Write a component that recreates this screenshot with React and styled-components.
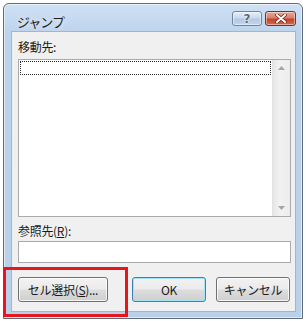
import React from 'react';
import styled, { createGlobalStyle } from 'styled-components';

const Global = createGlobalStyle`
  html, body {
    margin: 0;
    padding: 0;
    background: #ffffff;
  }
  body {
    font-family: "Noto Sans CJK JP", "Liberation Sans", sans-serif;
    font-size: 12px;
    color: #1a1a1a;
  }
`;

const Stage = styled.div`
  position: relative;
  width: 306px;
  height: 321px;
  padding: 3px 0 0 3px;
  box-sizing: border-box;
`;

const Window = styled.div`
  width: 300px;
  height: 316px;
  box-sizing: border-box;
  border: 1px solid #5f6b78;
  border-radius: 6px 6px 0 0;
  background: linear-gradient(180deg, #cfe0f4 0px, #bcd3ec 30px, #b8d0ea 100%);
  display: flex;
  flex-direction: column;
  box-shadow: inset 0 0 0 1px rgba(255, 255, 255, 0.55);
`;

const TitleBar = styled.div`
  height: 28px;
  display: flex;
  align-items: flex-start;
  padding: 0 6px 0 13px;
`;

const Title = styled.div`
  flex: 1;
  font-size: 13px;
  line-height: 15px;
  margin-top: 10px;
  color: #1c1c1c;
  letter-spacing: -1px;
  text-shadow: 0 0 6px rgba(255, 255, 255, 0.9);
`;

const CaptionButtons = styled.div`
  display: flex;
  gap: 3px;
  margin-top: 7px;
`;

const CaptionButton = styled.div`
  width: ${p => p.$w}px;
  height: 15px;
  box-sizing: border-box;
  border: 1px solid ${p => (p.$close ? '#7c2f25' : '#6f86a3')};
  border-radius: 3px;
  background: ${p =>
    p.$close
      ? 'linear-gradient(180deg, #e9a898 0%, #d9806c 45%, #c2432c 55%, #d36a50 100%)'
      : 'linear-gradient(180deg, #e6eef8 0%, #cad9ec 45%, #b3c8e2 55%, #c4d6ec 100%)'};
  box-shadow: inset 0 0 0 1px rgba(255, 255, 255, 0.45);
  display: flex;
  align-items: center;
  justify-content: center;
`;

const HelpMark = styled.span`
  font-family: "DejaVu Sans", sans-serif;
  font-weight: bold;
  font-size: 12px;
  line-height: 12px;
  color: #5a6676;
  text-shadow: 0 0 2px #ffffff, 0 0 1px #ffffff, 0 0 1px #ffffff;
`;

const Client = styled.div`
  flex: 1;
  margin: 0 6px 6px 7px;
  background: #f0f0f0;
  border: 1px solid #9fb6d1;
  padding: 6px 4px 9px 6px;
  display: flex;
  flex-direction: column;
`;

const Label = styled.div`
  font-size: 12px;
  line-height: 18px;
  margin-top: ${p => p.$top || 0}px;
  letter-spacing: -0.3px;
  u {
    text-decoration: underline;
    text-underline-offset: 1px;
  }
`;

const ListBox = styled.div`
  margin-top: 3px;
  height: 158px;
  box-sizing: border-box;
  border: 1px solid #a9abad;
  background: #ffffff;
  display: flex;
`;

const ListItems = styled.div`
  flex: 1;
  padding: 1px;
`;

const FocusItem = styled.div`
  height: 14px;
  box-sizing: border-box;
  border: 1px dotted #2a2a2a;
`;

const ScrollBar = styled.div`
  width: 17px;
  background: linear-gradient(90deg, #e6e6e6, #f2f2f2 40%, #ececec);
  border-left: 1px solid #e2e2e2;
  display: flex;
  flex-direction: column;
  justify-content: space-between;
  align-items: center;
  padding: 6px 0;
`;

const Arrow = ({ down }) => (
  <svg width="7" height="4" viewBox="0 0 7 4">
    <path d={down ? 'M0 0 H7 L3.5 4 Z' : 'M0 4 H7 L3.5 0 Z'} fill="#a5a5a5" />
  </svg>
);

const TextBox = styled.div`
  margin-top: 1px;
  height: 22px;
  box-sizing: border-box;
  border: 1px solid #a9abad;
  background: #ffffff;
`;

const ButtonRow = styled.div`
  margin-top: 14px;
  padding-right: 1px;
  display: flex;
  gap: 10px;
`;

const Button = styled.div`
  width: ${p => p.$w}px;
  height: 25px;
  box-sizing: border-box;
  border: 1px solid ${p => (p.$default ? '#3c7fb1' : '#707070')};
  border-radius: 3px;
  background: linear-gradient(180deg, #f2f2f2 0%, #ebebeb 48%, #dddddd 52%, #cfcfcf 100%);
  box-shadow: inset 0 0 0 1px ${p => (p.$default ? '#a6e2f8' : 'rgba(255,255,255,0.8)')};
  display: flex;
  align-items: center;
  justify-content: center;
  font-size: 12px;
  line-height: 14px;
  letter-spacing: -0.3px;
  margin-right: ${p => (p.$push ? 'auto' : '0')};
  u {
    text-decoration: underline;
    text-underline-offset: 1px;
  }
`;

const Highlight = styled.div`
  position: absolute;
  left: 3px;
  top: 267px;
  width: 125px;
  height: 50px;
  box-sizing: border-box;
  border: 3px solid #e8161c;
`;

const CloseIcon = () => (
  <svg width="12" height="9" viewBox="0 0 12 9">
    <path
      d="M2 1 L10 8 M10 1 L2 8"
      stroke="#6a1f15"
      strokeWidth="3.4"
      strokeLinecap="round"
    />
    <path
      d="M2 1 L10 8 M10 1 L2 8"
      stroke="#ffffff"
      strokeWidth="2"
      strokeLinecap="round"
    />
  </svg>
);

export default function App() {
  return (
    <Stage>
      <Global />
      <Window>
        <TitleBar>
          <Title>ジャンプ</Title>
          <CaptionButtons>
            <CaptionButton $w={30}>
              <HelpMark>?</HelpMark>
            </CaptionButton>
            <CaptionButton $w={31} $close>
              <CloseIcon />
            </CaptionButton>
          </CaptionButtons>
        </TitleBar>
        <Client>
          <Label>移動先:</Label>
          <ListBox>
            <ListItems>
              <FocusItem />
            </ListItems>
            <ScrollBar>
              <Arrow />
              <Arrow down />
            </ScrollBar>
          </ListBox>
          <Label $top={5}>
            参照先(<u>R</u>):
          </Label>
          <TextBox />
          <ButtonRow>
            <Button $w={90} $push>
              セル選択(<u>S</u>)...
            </Button>
            <Button $w={74} $default>
              OK
            </Button>
            <Button $w={74}>キャンセル</Button>
          </ButtonRow>
        </Client>
      </Window>
      <Highlight />
    </Stage>
  );
}
